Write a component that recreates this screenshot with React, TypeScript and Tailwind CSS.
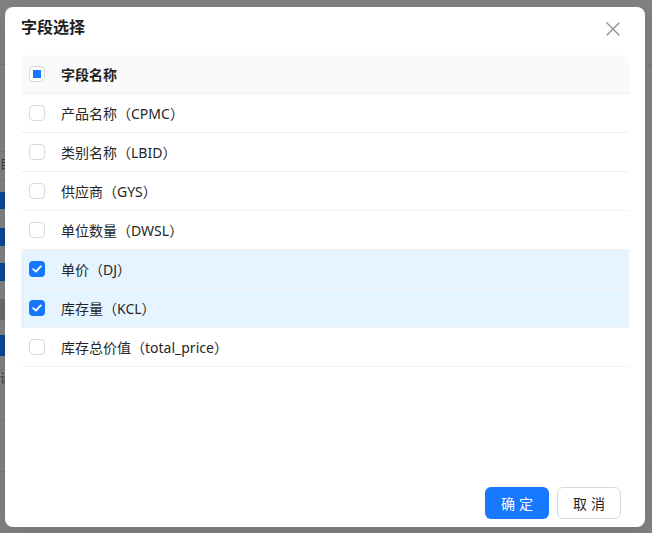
import { useState } from 'react';

type Field = {
  label: string;
  key: string;
};

const fields: Field[] = [
  { label: '产品名称', key: 'CPMC' },
  { label: '类别名称', key: 'LBID' },
  { label: '供应商', key: 'GYS' },
  { label: '单位数量', key: 'DWSL' },
  { label: '单价', key: 'DJ' },
  { label: '库存量', key: 'KCL' },
  { label: '库存总价值', key: 'total_price' },
];

function Checkbox({ state }: { state: 'on' | 'off' | 'some' }) {
  if (state === 'on') {
    return (
      <span className="flex h-4 w-4 items-center justify-center rounded-[4px] bg-[#1677ff]">
        <svg width="10" height="8" viewBox="0 0 10 8" fill="none">
          <path d="M1.2 4.1 3.9 6.6 8.8 1.4" stroke="white" strokeWidth="1.8" strokeLinecap="round" strokeLinejoin="round" />
        </svg>
      </span>
    );
  }
  return (
    <span className="flex h-4 w-4 items-center justify-center rounded-[4px] border border-[#d9d9d9] bg-white">
      {state === 'some' && <span className="h-2 w-2 bg-[#1677ff]" />}
    </span>
  );
}

export default function App() {
  const [checked, setChecked] = useState<string[]>(['DJ', 'KCL']);

  const toggle = (key: string) =>
    setChecked((prev) => (prev.includes(key) ? prev.filter((k) => k !== key) : [...prev, key]));

  const allState = checked.length === 0 ? 'off' : checked.length === fields.length ? 'on' : 'some';

  return (
    <div className="relative h-[533px] w-[652px] overflow-hidden bg-[#808080] font-['Noto_Sans','Noto_Sans_CJK_SC',sans-serif]">
      {/* dimmed page behind the dialog */}
      <div className="flex h-full flex-col">
        <div className="h-[65px] border-b border-[#747474]" />
      </div>
      <div className="pointer-events-none absolute left-0 top-[151px] flex w-[6px] flex-col">
        <div className="h-px bg-[#747474]" />
        <span className="mt-[6px] text-[12px] leading-[14px] text-[#3a3a3a]">目</span>
        <div className="mt-[8px] h-px bg-[#747474]" />
        <div className="mt-[11px] h-[17px] bg-[#0c4592]" />
        <div className="mt-[19px] h-[18px] bg-[#0c4592]" />
        <div className="mt-[17px] h-[18px] bg-[#0c4592]" />
        <div className="mt-[18px] h-[21px] bg-[#6a6a6a]" />
        <div className="mt-[15px] h-[21px] bg-[#0c4592]" />
        <div className="mt-[13px] h-px bg-[#747474]" />
        <span className="mt-[2px] text-[12px] leading-[14px] text-[#3a3a3a]">设</span>
        <div className="mt-[34px] h-px bg-[#747474]" />
        <div className="mt-[50px] h-px bg-[#747474]" />
      </div>
      <div className="pointer-events-none absolute right-0 top-[420px] flex w-[7px] flex-col">
        <div className="h-px bg-[#747474]" />
        <div className="mt-[49px] h-px bg-[#747474]" />
      </div>

      {/* dialog */}
      <div className="absolute left-[5px] top-[7px] flex h-[520px] w-[640px] flex-col rounded-[8px] bg-white shadow-[0_6px_16px_rgba(0,0,0,0.08)]">
        <div className="mb-[8px] flex h-[40px] items-center justify-between pl-[16px] pr-[22px]">
          <h2 className="text-[16px] font-semibold text-[#1f1f1f]">字段选择</h2>
          <button className="mt-[4px] flex h-5 w-5 items-center justify-center text-[#8c8c8c]">
            <svg width="14" height="14" viewBox="0 0 14 14" fill="none">
              <path d="M1 1 13 13M13 1 1 13" stroke="currentColor" strokeWidth="1.3" strokeLinecap="round" />
            </svg>
          </button>
        </div>

        <div className="flex-1 px-[16px]">
          <div className="flex h-[39px] items-center rounded-t-[8px] border-b border-[#f0f0f0] bg-[#fafafa] text-[14px] font-semibold text-[#1f1f1f]">
            <button className="ml-[8px] mr-[16px]" onClick={() => setChecked(allState === 'on' ? [] : fields.map((f) => f.key))}>
              <Checkbox state={allState} />
            </button>
            字段名称
          </div>
          {fields.map((f) => {
            const on = checked.includes(f.key);
            return (
              <div
                key={f.key}
                onClick={() => toggle(f.key)}
                className={`flex h-[39px] cursor-pointer items-center border-b border-[#f0f0f0] text-[14px] text-[#262626] ${on ? 'bg-[#e6f4ff]' : 'bg-white'}`}
              >
                <span className="ml-[8px] mr-[16px]">
                  <Checkbox state={on ? 'on' : 'off'} />
                </span>
                {f.label}（{f.key}）
              </div>
            );
          })}
        </div>

        <div className="flex justify-end gap-[8px] pb-[8px] pr-[24px]">
          <button className="h-[32px] w-[64px] rounded-[6px] bg-[#1677ff] text-[14px] tracking-[4px] text-white indent-[4px]">确定</button>
          <button className="h-[32px] w-[64px] rounded-[6px] border border-[#d9d9d9] bg-white text-[14px] tracking-[4px] text-[#1f1f1f] indent-[4px]">取消</button>
        </div>
      </div>
    </div>
  );
}
